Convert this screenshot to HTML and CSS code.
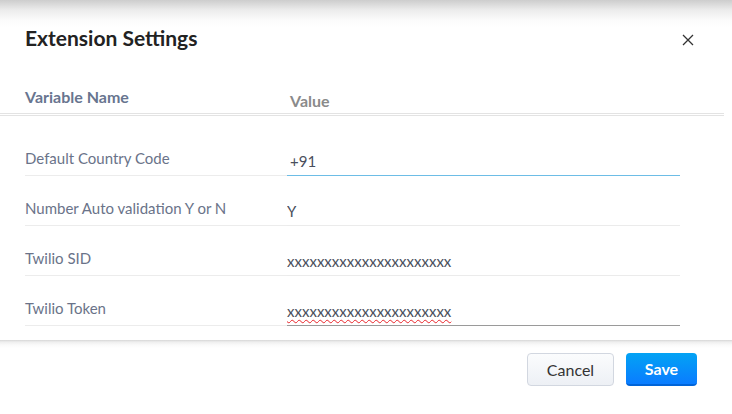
FILE: index.html
```html
<!DOCTYPE html>
<html lang="en">
<head>
  <meta charset="UTF-8">
  <title>Extension Settings</title>
  <link rel="stylesheet" href="styles.css">
</head>
<body>
  <div class="dialog">
    <!-- Header -->
    <div class="dialog-head">
      <h1 class="title">Extension Settings</h1>
      <button class="close" aria-label="Close">
        <svg width="12" height="12" viewBox="0 0 12 12"><path d="M1 1L11 11M11 1L1 11" stroke="#333" stroke-width="1.3" fill="none"/></svg>
      </button>
    </div>

    <!-- Column titles -->
    <div class="col-head">
      <span class="col-name">Variable Name</span>
      <span class="col-value">Value</span>
    </div>

    <!-- Variables -->
    <div class="rows">
      <div class="row">
        <label class="var-name">Default Country Code</label>
        <input class="var-value focused" type="text" value="+91">
      </div>
      <div class="row">
        <label class="var-name">Number Auto validation Y or N</label>
        <input class="var-value" type="text" value="Y">
      </div>
      <div class="row">
        <label class="var-name">Twilio SID</label>
        <input class="var-value" type="text" value="xxxxxxxxxxxxxxxxxxxxxx">
      </div>
      <div class="row">
        <label class="var-name">Twilio Token</label>
        <div class="var-value hovered" contenteditable="true"><span class="misspelled">xxxxxxxxxxxxxxxxxxxxxx</span></div>
      </div>
    </div>

    <!-- Footer -->
    <div class="dialog-foot">
      <button class="btn btn-cancel">Cancel</button>
      <button class="btn btn-save">Save</button>
    </div>
  </div>
</body>
</html>
```

FILE: styles.css
```css
/* Base */
body {
  margin: 0;
  font-family: Lato, "Open Sans", sans-serif;
  background-color: #ffffff;
}
.dialog {
  width: 732px;
  height: 414px;
  overflow: hidden;
}
/* Header */
.dialog-head {
  display: flex;
  justify-content: space-between;
  align-items: flex-start;
  height: 80px;
  box-sizing: border-box;
  padding: 26px 38px 0 25px;
  background: linear-gradient(to bottom, #cdcdcd 0, #ececec 10px, #fbfbfb 20px, #ffffff 27px);
}
.title {
  margin: 0;
  font-size: 21px;
  line-height: 24px;
  font-weight: 700;
  color: #222222;
}
.close {
  margin-top: 8px;
  padding: 0;
  border: none;
  background: none;
  width: 12px;
  height: 12px;
  cursor: pointer;
}
.close svg {
  display: block;
}
/* Column titles */
.col-head {
  display: flex;
  height: 36px;
  box-sizing: border-box;
  padding: 7px 0 0 25px;
  margin-right: 8px;
  border-bottom: 3px double #e3e3e3;
  font-size: 16px;
  line-height: 20px;
  font-weight: 700;
}
.col-name {
  width: 265px;
  color: #68758f;
}
.col-value {
  padding-top: 4px;
  color: #8a8a8a;
}
/* Variable rows */
.rows {
  padding-top: 10px;
}
.row {
  display: flex;
  margin: 0 52px 0 25px;
  height: 50px;
}
.var-name {
  display: flex;
  align-items: flex-end;
  width: 262px;
  box-sizing: border-box;
  padding-bottom: 7px;
  border-bottom: 1px solid #ececec;
  font-size: 15px;
  line-height: 20px;
  color: #6a7389;
}
.var-value {
  flex: 1;
  align-self: flex-end;
  height: 26px;
  line-height: 22px;
  box-sizing: border-box;
  margin: 0;
  padding: 0 0 3px 0;
  border: none;
  border-bottom: 1px solid #ebebeb;
  outline: none;
  font-family: Lato, "Open Sans", sans-serif;
  font-size: 15px;
  color: #4a4f5c;
  background: transparent;
}
.var-value.focused {
  border-bottom-color: #6dbde6;
  padding-left: 3px;
}
.var-value.hovered {
  border-bottom-color: #9a9a9a;
}
.misspelled {
  text-decoration: underline wavy #e8242a;
  text-decoration-thickness: 1px;
  text-underline-offset: 2px;
}
/* Footer */
.dialog-foot {
  display: flex;
  justify-content: flex-end;
  gap: 12px;
  margin-top: 14px;
  padding: 13px 35px 0 0;
  background: linear-gradient(to bottom, #d6d6d6 0, #efefef 2px, #fafafa 5px, #ffffff 8px);
}
.btn {
  height: 33px;
  border-radius: 4px;
  font-family: Lato, "Open Sans", sans-serif;
  font-size: 16px;
  cursor: pointer;
}
.btn-cancel {
  width: 87px;
  border: 1px solid #d2d7e0;
  background: linear-gradient(to bottom, #fbfcfd, #edf0f5);
  color: #333333;
}
.btn-save {
  width: 71px;
  border: none;
  border-bottom: 2px solid #0064d8;
  background: linear-gradient(to bottom, #03a3f4, #0a7cff);
  color: #ffffff;
  font-weight: 700;
}
```
